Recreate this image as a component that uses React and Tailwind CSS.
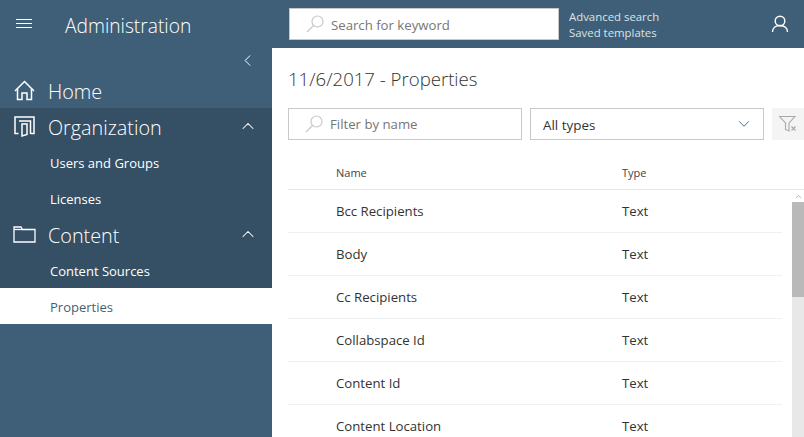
import React from 'react';
import { ChevronLeft, ChevronUp, ChevronDown } from 'lucide-react';

const HomeIcon = () => (
    <svg width="21" height="21" viewBox="0 0 21 21" fill="none" stroke="currentColor" strokeWidth="1.5">
        <path d="M1 11 10.5 1.5 20 11" />
        <path d="M3.5 8.5V19.5h4.5v-6.5h5v6.5h4.5V8.5" />
    </svg>
);

const OrgIcon = () => (
    <svg width="21" height="21" viewBox="0 0 21 21" fill="none" stroke="currentColor" strokeWidth="1.5">
        <path d="M4.5 17.5H1V1h19v16.5h-3" />
        <path d="M5 5h11.5v13" />
        <path d="M8 8h5v10.5l-5 1.5z" />
    </svg>
);

const FolderIcon = () => (
    <svg width="23" height="17" viewBox="0 0 23 17" fill="none" stroke="currentColor" strokeWidth="1.3">
        <path d="M1 16V1h7l1.5 2.5H22V16z" />
        <path d="M1 3.5h8.5" />
    </svg>
);

const SearchIcon = () => (
    <svg width="18" height="18" viewBox="0 0 18 18" fill="none" stroke="#c8c8c8" strokeWidth="1.2">
        <circle cx="11.5" cy="6.5" r="5.5" />
        <path d="M7.5 10.5 1 17" />
    </svg>
);

const UserIcon = () => (
    <svg width="18" height="18" viewBox="0 0 18 18" fill="none" stroke="currentColor" strokeWidth="1.4">
        <circle cx="9" cy="6" r="4.8" />
        <path d="M1.5 17c0-4 3-6.5 7.5-6.5s7.5 2.5 7.5 6.5" />
    </svg>
);

const ClearFilterIcon = () => (
    <svg width="18" height="16" viewBox="0 0 18 16" fill="none" stroke="#a8a8a8" strokeWidth="1.1">
        <path d="M.5 .5h15.5l-6 6.5v8l-3.5-1.5V7z" />
        <path d="m12.5 10.5 4 4m0-4-4 4" />
    </svg>
);

const rows = ['Bcc Recipients', 'Body', 'Cc Recipients', 'Collabspace Id', 'Content Id', 'Content Location'];

const SubItem = ({ label, active }) => (
    <div className={`h-9 flex items-center pl-[50px] pt-[3px] text-[13px] ${active ? 'bg-white text-[#3f5f78]' : 'text-white'}`}>
        <span className={active ? 'font-normal' : 'font-medium'}>{label}</span>
    </div>
);

const App = () => {
    return (
        <div className="w-[804px] h-[437px] overflow-hidden flex flex-col bg-white font-['Open_Sans',sans-serif]">
            {/* top bar */}
            <div className="h-12 flex-shrink-0 flex items-center bg-[#3f5f78] text-white">
                <div className="w-[272px] flex items-center">
                    <div className="ml-4 w-4 flex flex-col gap-[3px]">
                        <div className="h-px bg-white" />
                        <div className="h-px bg-white" />
                        <div className="h-px bg-white" />
                    </div>
                    <span className="ml-[33px] pt-[3px] text-[19.2px] font-light leading-none">Administration</span>
                </div>
                <div className="ml-[17px] w-[270px] h-[32px] bg-white border border-[#c8c8c8] flex items-center pl-4">
                    <SearchIcon />
                    <span className="ml-[7px] pt-[3px] text-[13.2px] text-[#767676]">Search for keyword</span>
                </div>
                <div className="ml-[10px] pt-[2px] flex flex-col text-[11.4px] leading-4 text-[#dbe3e9]">
                    <span>Advanced search</span>
                    <span>Saved templates</span>
                </div>
                <div className="ml-auto mr-[15px] flex"><UserIcon /></div>
            </div>

            <div className="flex-1 flex min-h-0">
                {/* sidebar */}
                <div className="w-[272px] flex-shrink-0 bg-[#3f5f78] text-white flex flex-col">
                    <div className="h-6 flex items-center justify-end pr-[15px]">
                        <ChevronLeft size={19} strokeWidth={1.25} />
                    </div>
                    <div className="h-9 flex items-center pl-[14px]">
                        <HomeIcon />
                        <span className="ml-[13px] pt-1 text-[19.8px] font-light">Home</span>
                    </div>
                    <div className="bg-[#354f64]">
                        <div className="h-9 flex items-center pl-[14px] pr-[14px]">
                            <OrgIcon />
                            <span className="ml-[13px] pt-1 text-[19.8px] font-light">Organization</span>
                            <ChevronUp size={20} strokeWidth={1.25} className="ml-auto" />
                        </div>
                        <SubItem label="Users and Groups" />
                        <SubItem label="Licenses" />
                        <div className="h-9 flex items-center pl-[13px] pr-[14px]">
                            <FolderIcon />
                            <span className="ml-3 pt-1 text-[19.8px] font-light">Content</span>
                            <ChevronUp size={20} strokeWidth={1.25} className="ml-auto" />
                        </div>
                        <SubItem label="Content Sources" />
                    </div>
                    <SubItem label="Properties" active />
                </div>

                {/* main */}
                <div className="flex-1 min-w-0 flex flex-col pl-4">
                    <h1 className="mt-[17px] h-7 text-[18.6px] leading-7 font-light text-[#333]">11/6/2017 - Properties</h1>
                    <div className="mt-[15px] flex h-8 flex-shrink-0">
                        <div className="w-[234px] border border-[#c8c8c8] flex items-center pl-4">
                            <SearchIcon />
                            <span className="ml-[7px] pt-[2px] text-[13.2px] text-[#767676]">Filter by name</span>
                        </div>
                        <div className="ml-2 w-[234px] border border-[#c8c8c8] flex items-center pl-3 pr-[10px] text-[13.4px] text-[#333]">
                            <span className="pt-[3px]">All types</span>
                            <ChevronDown size={18} strokeWidth={1.25} className="ml-auto text-[#3f5f78]" />
                        </div>
                        <div className="ml-2 w-8 bg-[#f4f4f4] flex items-center justify-center"><ClearFilterIcon /></div>
                    </div>
                    <div className="mt-[17px] h-[33px] flex-shrink-0 border-b border-[#e8e8e8] flex items-center text-[11px] text-[#444]">
                        <span className="ml-12 w-[286px]">Name</span>
                        <span>Type</span>
                    </div>
                    <div className="flex-1 min-h-0 flex overflow-hidden">
                        <div className="w-[494px] flex-shrink-0">
                            {rows.map((name) => (
                                <div key={name} className="h-[43px] border-b border-[#f0f0f0] flex items-center pt-[2px] text-[13.2px] text-[#333]">
                                    <span className="ml-12 w-[286px]">{name}</span>
                                    <span>Text</span>
                                </div>
                            ))}
                        </div>
                        <div className="ml-[10px] w-3 flex flex-col">
                            <div className="h-3 flex items-center justify-center text-[#9a9a9a]"><ChevronUp size={9} /></div>
                            <div className="h-[95px] bg-[#b9b9b9]" />
                            <div className="flex-1 bg-[#e8e8e8]" />
                        </div>
                    </div>
                </div>
            </div>
        </div>
    );
};

export default App;
